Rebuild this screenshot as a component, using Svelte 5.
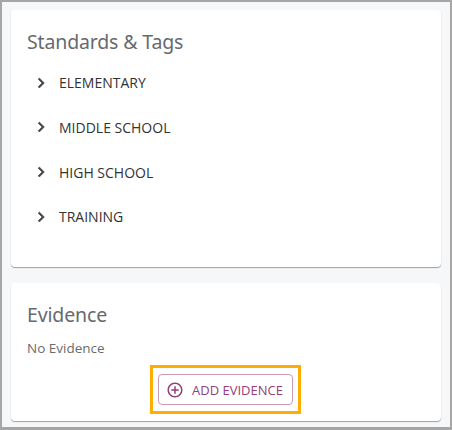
<script>
  const groups = ['ELEMENTARY', 'MIDDLE SCHOOL', 'HIGH SCHOOL', 'TRAINING'];
</script>

<div class="frame">
  <section class="card standards">
    <h2>Standards &amp; Tags</h2>
    <ul>
      {#each groups as group}
        <li>
          <svg class="chevron" viewBox="0 0 24 24" width="20" height="20" aria-hidden="true">
            <path d="M8.6 16.6 13.2 12 8.6 7.4 10 6l6 6-6 6z" />
          </svg>
          <span>{group}</span>
        </li>
      {/each}
    </ul>
  </section>

  <section class="card evidence">
    <h2>Evidence</h2>
    <p>No Evidence</p>
    <div class="actions">
      <div class="highlight">
        <button type="button">
          <svg viewBox="0 0 24 24" width="18" height="18" aria-hidden="true">
            <path d="M13 7h-2v4H7v2h4v4h2v-4h4v-2h-4zm-1-5C6.48 2 2 6.48 2 12s4.48 10 10 10 10-4.48 10-10S17.52 2 12 2m0 18c-4.41 0-8-3.59-8-8s3.59-8 8-8 8 3.59 8 8-3.59 8-8 8" />
          </svg>
          ADD EVIDENCE
        </button>
      </div>
    </div>
  </section>
</div>

<style>
  :global(body) {
    margin: 0;
    font-family: "Open Sans", "Noto Sans", sans-serif;
  }

  .frame {
    box-sizing: border-box;
    width: 452px;
    height: 430px;
    border: 2px solid #a6a6a6;
    border-bottom-width: 3px;
    background: #f6f7f9;
    padding: 8px 9px 0;
    display: flex;
    flex-direction: column;
    gap: 16px;
    overflow: hidden;
  }

  /* ── Cards ─────────────────────────────────────── */

  .card {
    background: #fff;
    border-radius: 4px;
    box-shadow: 0 1px 1px rgba(0, 0, 0, 0.35);
    padding: 0 16px;
  }

  .standards {
    height: 257px;
  }

  .evidence {
    height: 138px;
  }

  h2 {
    margin: 0;
    padding-top: 18px;
    font-family: "Noto Sans", sans-serif;
    font-size: 19.5px;
    font-weight: 400;
    letter-spacing: -0.15px;
    line-height: 28px;
    color: #666a6e;
  }

  /* ── Tree rows ─────────────────────────────────── */

  ul {
    list-style: none;
    margin: 4.4px 0 0;
    padding: 0;
  }

  li {
    display: flex;
    align-items: center;
    height: 44.67px;
    font-size: 14px;
    color: #333;
  }

  .chevron {
    margin-left: 4px;
    margin-right: 8px;
    fill: #444;
    stroke: #444;
    stroke-width: 0.7;
  }

  p {
    margin: 10px 0 0;
    font-size: 13.5px;
    line-height: 18px;
    color: #6b6b6b;
  }

  /* ── Action ────────────────────────────────────── */

  .actions {
    display: flex;
    justify-content: center;
    margin-top: 8px;
  }

  .highlight {
    border: 3px solid #ffad00;
    padding: 6px 5px;
    margin-left: -1px;
  }

  button {
    display: flex;
    align-items: center;
    gap: 8px;
    box-sizing: border-box;
    height: 31px;
    width: 135px;
    padding: 0 7px;
    background: #fff;
    border: 1px solid #c99ab4;
    border-radius: 4px;
    font: 400 13px "Open Sans", sans-serif;
    color: #93407a;
  }

  button svg {
    fill: #93407a;
    flex-shrink: 0;
  }
</style>
